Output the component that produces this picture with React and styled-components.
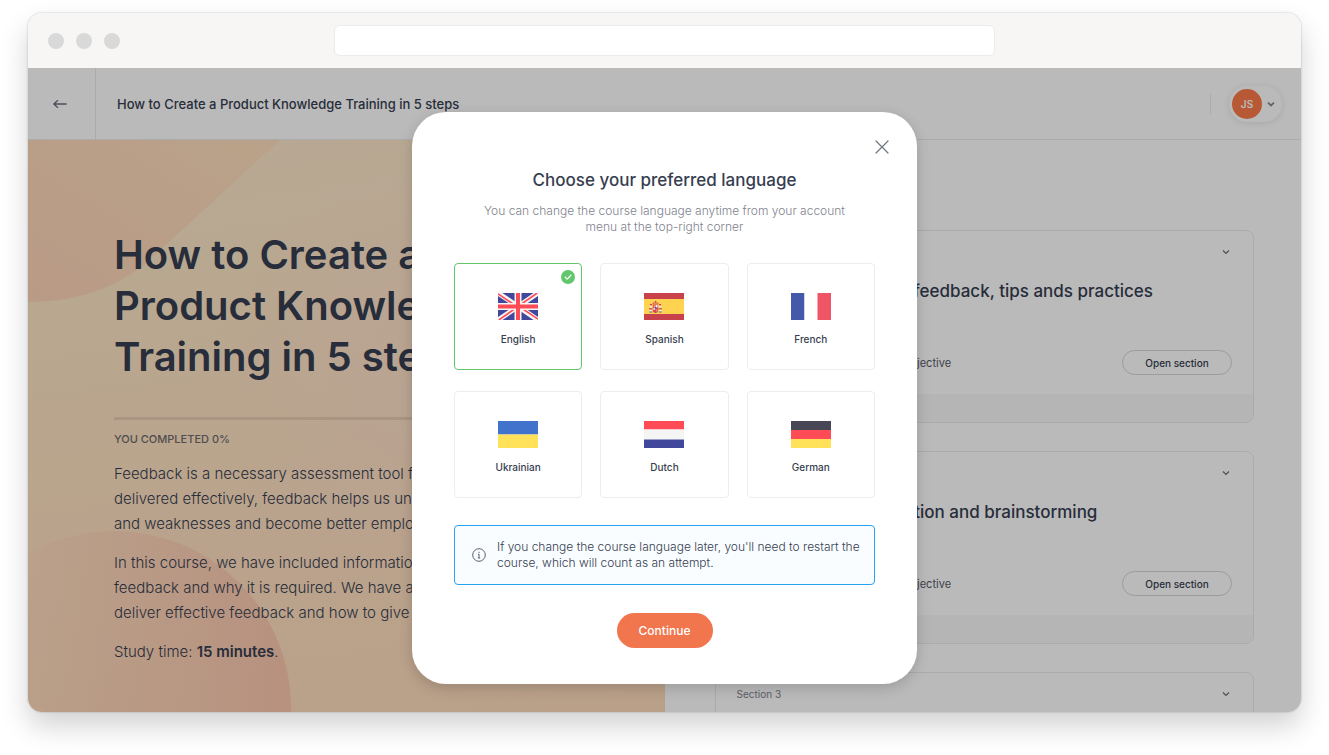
import React, { useState } from "react";
import styled, { createGlobalStyle } from "styled-components";

const ink = "#363e50";

const GlobalStyle = createGlobalStyle`
  * { box-sizing: border-box; }
  body {
    margin: 0;
    background: #fff;
    color: ${ink};
    font-family: Inter, "Liberation Sans", sans-serif;
    -webkit-font-smoothing: antialiased;
  }
  h1, h2, h3, p { margin: 0; }
  button, input { font-family: inherit; }
  button { cursor: pointer; }
`;

const Page = styled.div`
  height: 100vh;
  padding: 13px 28px 43px;
`;

const BrowserWindow = styled.div`
  display: flex;
  flex-direction: column;
  height: 100%;
  border-radius: 14px;
  overflow: hidden;
  background: #fff;
  box-shadow: 0 0 2px rgba(0, 0, 0, 0.28), 0 14px 28px rgba(0, 0, 0, 0.18);
`;

const BrowserBar = styled.div`
  display: grid;
  grid-template-columns: 1fr 52% 1fr;
  align-items: center;
  flex: none;
  height: 55px;
  background: #f7f6f5;
`;

const WindowDots = styled.div`
  display: flex;
  gap: 12px;
  padding-left: 20px;
`;

const Dot = styled.span`
  width: 16px;
  height: 16px;
  border-radius: 50%;
  background: #d9d9d9;
`;

const AddressInput = styled.input`
  width: 100%;
  height: 31px;
  border: 1px solid #ecebe7;
  border-radius: 6px;
  background: #fff;
`;

const AppArea = styled.div`
  position: relative;
  display: flex;
  flex-direction: column;
  flex: 1;
  min-height: 0;
  overflow: hidden;
`;

const Header = styled.header`
  display: flex;
  align-items: center;
  flex: none;
  height: 72px;
  padding-right: 19px;
  border-bottom: 1px solid #ebebeb;
`;

const BackButton = styled.button`
  display: flex;
  align-items: center;
  justify-content: center;
  width: 68px;
  height: 71px;
  padding: 0 4px 0 0;
  border: 0;
  border-right: 1px solid #ebebeb;
  background: none;
  color: #6a6f7b;
`;

const HeaderTitle = styled.h2`
  flex: 1;
  padding-left: 21px;
  font-size: 13px;
  line-height: 20px;
  font-weight: 500;
`;

const HeaderRule = styled.span`
  width: 1px;
  height: 20px;
  margin-right: 18px;
  background: #ebebeb;
`;

const UserMenu = styled.button`
  display: flex;
  align-items: center;
  gap: 5px;
  height: 36px;
  padding: 0 7px 0 3px;
  border: 0;
  border-radius: 18px;
  background: #fff;
  color: #858a95;
  box-shadow: 0 1px 6px rgba(40, 50, 70, 0.12);
`;

const Avatar = styled.span`
  width: 30px;
  height: 30px;
  border-radius: 50%;
  background: #fd7a49;
  color: #fff;
  font-size: 10px;
  line-height: 30px;
  font-weight: 600;
`;

const Columns = styled.div`
  display: grid;
  grid-template-columns: 1fr 1fr;
  flex: 1;
  min-height: 0;
`;

const Intro = styled.section`
  position: relative;
  overflow: hidden;
  padding: 89px 86px 0;
  background: radial-gradient(circle at 62% 32%, rgba(255, 224, 203, 0.8) 0, rgba(255, 224, 203, 0) 34%),
    linear-gradient(172deg, #fde8cc 0%, #fee5c4 25%, #ffe0c1 50%, #fed9b9 100%);
`;

const Shapes = styled.svg`
  position: absolute;
  inset: 0;
`;

const IntroBody = styled.div`
  position: relative;
  white-space: nowrap;
`;

const CourseTitle = styled.h1`
  font-size: 40px;
  line-height: 51px;
  font-weight: 600;
`;

const ProgressTrack = styled.div`
  height: 3px;
  margin-top: 35px;
  background: #e9cdb2;
`;

const ProgressLabel = styled.p`
  margin-top: 12px;
  color: #6f6a6c;
  font-size: 11px;
  line-height: 15px;
  font-weight: 500;
`;

const Paragraph = styled.p`
  margin-top: 14px;
  font-size: 15px;
  line-height: 25px;
  font-weight: 300;
  b { font-weight: 600; }
`;

const Sections = styled.section`
  display: flex;
  flex-direction: column;
  gap: 28px;
  padding: 90px 47px 0 50px;
`;

const SectionCard = styled.article`
  flex: none;
  height: 193px;
  border: 1px solid #ebebeb;
  border-radius: 8px;
  display: flex;
  flex-direction: column;
  overflow: hidden;
`;

const SectionTop = styled.div`
  display: flex;
  align-items: center;
  justify-content: space-between;
  padding: 11px 21px 0;
  color: #7f838d;
  font-size: 10px;
  line-height: 20px;
`;

const ToggleButton = styled.button`
  display: flex;
  padding: 2px;
  border: 0;
  background: none;
  color: #6a6f7b;
`;

const SectionTitle = styled.h3`
  padding: 17px 21px 0;
  font-size: 17px;
  line-height: 24px;
  font-weight: 500;
  white-space: nowrap;
`;

const SectionRow = styled.div`
  display: flex;
  align-items: center;
  justify-content: space-between;
  padding: 47px 21px 19px;
`;

const SectionMeta = styled.p`
  display: flex;
  gap: 26px;
  font-size: 11px;
  line-height: 16px;
  color: #555b69;
`;

const OpenButton = styled.button`
  width: 110px;
  height: 25px;
  padding: 0;
  border: 1px solid #d5d6d9;
  border-radius: 13px;
  background: none;
  color: ${ink};
  font-size: 10px;
  font-weight: 500;
`;

const SectionFoot = styled.div`
  flex: 1;
  background: #f9f9f9;
`;

const Overlay = styled.div`
  position: absolute;
  inset: 0;
  display: flex;
  justify-content: center;
  align-items: flex-start;
  padding-top: 44px;
  background: rgba(0, 0, 0, 0.27);
`;

const Modal = styled.div`
  position: relative;
  display: flex;
  flex-direction: column;
  align-items: center;
  width: 505px;
  padding: 56px 42px 36px;
  border-radius: 34px;
  background: #fff;
  box-shadow: 0 4px 14px rgba(0, 0, 0, 0.16);
`;

const CloseButton = styled.button`
  position: absolute;
  top: 25px;
  right: 25px;
  display: flex;
  padding: 3px;
  border: 0;
  background: none;
  color: #6f7480;
`;

const ModalTitle = styled.h2`
  font-size: 17px;
  line-height: 24px;
  font-weight: 500;
`;

const ModalText = styled.p`
  width: 370px;
  margin-top: 11px;
  color: #7f838e;
  font-size: 12px;
  line-height: 16px;
  font-weight: 300;
  text-align: center;
`;

const LanguageGrid = styled.div`
  display: grid;
  grid-template-columns: repeat(3, 1fr);
  gap: 21px 18px;
  width: 100%;
  margin-top: 28px;
`;

const LanguageCard = styled.label`
  position: relative;
  display: flex;
  flex-direction: column;
  align-items: center;
  gap: 11px;
  height: 107px;
  padding-top: 30px;
  font-size: 10px;
  line-height: 16px;
  font-weight: 500;
  cursor: pointer;
`;

const LanguageInput = styled.input`
  position: absolute;
  inset: 0;
  margin: 0;
  appearance: none;
  border: 1px solid #ededee;
  border-radius: 4px;
  cursor: pointer;
  &:checked { border-color: #62c66c; }
`;

const CheckBadge = styled.svg`
  position: absolute;
  top: 7px;
  right: 7px;
`;

const Notice = styled.div`
  display: flex;
  align-items: center;
  gap: 11px;
  width: 100%;
  height: 60px;
  margin-top: 27px;
  padding: 0 8px 0 17px;
  border: 1px solid #27a3f2;
  border-radius: 4px;
  background: #f9fdff;
  font-size: 12px;
  line-height: 16px;
  font-weight: 300;
  svg { flex: none; }
`;

const ContinueButton = styled.button`
  width: 96px;
  height: 35px;
  margin-top: 28px;
  padding: 0;
  border: 0;
  border-radius: 18px;
  background: #f1764d;
  color: #fff;
  font-size: 12px;
  line-height: 16px;
  font-weight: 500;
`;

const Chevron = ({ weight = 1.3 }) => (
  <svg width="8" height="8" viewBox="0 0 8 8" fill="none" stroke="currentColor" strokeWidth={weight} aria-hidden="true">
    <path d="M1 2.6 4 5.4 7 2.6" />
  </svg>
);

const flagArt = {
  English: (
    <>
      <path fill="#41479b" d="M0 0h40v27H0z" />
      <path stroke="#f5f5f5" strokeWidth="5" d="M0 0 40 27M40 0 0 27" />
      <path stroke="#ff4b55" strokeWidth="1.6" d="M0 .8 18 13M40 26.2 22 14M39.2 0 22 12M.8 27 18 15" />
      <path fill="#f5f5f5" d="M16.5 0h7v27h-7zM0 10h40v7H0z" />
      <path fill="#ff4b55" d="M18 0h4v27h-4zM0 11.5h40v4H0z" />
    </>
  ),
  Spanish: (
    <>
      <path fill="#c8414b" d="M0 0h40v27H0z" />
      <path fill="#ffd250" d="M0 6h40v15H0z" />
      <path fill="#e9a58a" d="M6.2 12h1.6v6H6.2zM15.2 12h1.6v6h-1.6z" />
      <path fill="#f5f5f5" d="M5.6 13.2h2.4v1.2H5.6zM15 13.2h2.4v1.2H15zM5.6 17h2.4v1.4H5.6zM15 17h2.4v1.4H15z" />
      <path fill="#5064aa" d="M5.4 18.6h2.8v.9H5.4zM14.8 18.6h2.8v.9h-2.8z" />
      <path fill="#c8414b" d="M5 15.2h3.4v1H5zM14.6 15.2H18v1h-3.4zM6 11h2v.9H6zM15 11h2v.9h-2z" />
      <path fill="#db4455" d="M8.8 11.6h5.4v5.6a2.7 2.7 0 0 1-5.4 0z" />
      <path fill="#f5f5f5" d="M11.6 12h2v2.4h-2zM9.4 14.8h1.8v2H9.4z" />
      <path fill="#ffb441" d="M9.6 12.4h1.4v1.4H9.6zM12.2 16.6h1.2v1.6h-1.2z" />
      <path fill="#5064aa" d="M10.8 14h1.6v2h-1.6z" />
      <path fill="none" stroke="#d0605a" strokeWidth="0.9" d="M8.8 10.8c0-2.4 5.4-2.4 5.4 0z" />
      <path fill="#c8414b" d="M11 8h1v1.4h-1z" />
    </>
  ),
  French: (
    <>
      <path fill="#4658a9" d="M0 0h13.5v27H0z" />
      <path fill="#fff" d="M13.5 0h13v27h-13z" />
      <path fill="#ef5565" d="M26.5 0H40v27H26.5z" />
    </>
  ),
  Ukrainian: (
    <>
      <path fill="#4173cd" d="M0 0h40v13.5H0z" />
      <path fill="#ffe15a" d="M0 13.5h40V27H0z" />
    </>
  ),
  Dutch: (
    <>
      <path fill="#ff4b55" d="M0 0h40v8.5H0z" />
      <path fill="#f5f5f5" d="M0 8.5h40v10H0z" />
      <path fill="#41479b" d="M0 18.5h40V27H0z" />
    </>
  ),
  German: (
    <>
      <path fill="#464655" d="M0 0h40v9H0z" />
      <path fill="#ff4b55" d="M0 9h40v9H0z" />
      <path fill="#ffe15a" d="M0 18h40v9H0z" />
    </>
  ),
};

const Flag = ({ name }) => (
  <svg width="40" height="27" viewBox="0 0 40 27" aria-hidden="true">{flagArt[name]}</svg>
);

const sections = [
  { id: 1, title: "Offering constructive feedback, tips ands practices" },
  { id: 2, title: "Creative ideas generation and brainstorming" },
  { id: 3 },
];

export default function App() {
  const [language, setLanguage] = useState("English");

  return (
    <Page>
      <GlobalStyle />
      <BrowserWindow>
        <BrowserBar>
          <WindowDots><Dot /><Dot /><Dot /></WindowDots>
          <AddressInput type="text" aria-label="Address" />
        </BrowserBar>
        <AppArea>
          <Header>
            <BackButton aria-label="Back">
              <svg width="14" height="10" viewBox="0 0 14 10" fill="none" stroke="currentColor" strokeWidth="1.3" strokeLinecap="round" strokeLinejoin="round" aria-hidden="true">
                <path d="M13.2 5H.9M4.6 1.6.8 5l3.8 3.4" />
              </svg>
            </BackButton>
            <HeaderTitle>How to Create a Product Knowledge Training in 5 steps</HeaderTitle>
            <HeaderRule />
            <UserMenu aria-label="Account menu">
              <Avatar>JS</Avatar>
              <Chevron weight={1.8} />
            </UserMenu>
          </Header>
          <Columns>
            <Intro>
              <Shapes width="100%" height="100%" aria-hidden="true">
                <defs>
                  <linearGradient id="corner" x1="1" y1="0" x2="0" y2="1">
                    <stop offset="0" stopColor="#ffdfbd" />
                    <stop offset="1" stopColor="#fed4b8" />
                  </linearGradient>
                  <linearGradient id="disc" x1="0" y1="0" x2="1" y2="0">
                    <stop offset="0.15" stopColor="#fcc7ae" stopOpacity="0" />
                    <stop offset="1" stopColor="#fcc5ad" stopOpacity="0.9" />
                  </linearGradient>
                </defs>
                <path fill="url(#corner)" d="M0 0H252L152 92C128 113 121 122 109 130C80 151 42 162 0 162Z" />
                <circle fill="url(#disc)" cx="86" cy="568" r="177" />
              </Shapes>
              <IntroBody>
                <CourseTitle>
                  How to Create a<br />Product Knowledge<br />Training in 5 steps
                </CourseTitle>
                <ProgressTrack />
                <ProgressLabel>YOU COMPLETED 0%</ProgressLabel>
                <Paragraph>
                  Feedback is a necessary assessment tool for all. When<br />
                  delivered effectively, feedback helps us understand<br />
                  and weaknesses and become better employees.
                </Paragraph>
                <Paragraph>
                  In this course, we have included information about<br />
                  feedback and why it is required. We have added how to<br />
                  deliver effective feedback and how to give it well.
                </Paragraph>
                <Paragraph>Study time: <b>15 minutes</b>.</Paragraph>
              </IntroBody>
            </Intro>
            <Sections>
              {sections.map(({ id, title }) => (
                <SectionCard key={id}>
                  <SectionTop>
                    <span>Section {id}</span>
                    <ToggleButton aria-label={`Toggle section ${id}`}><Chevron /></ToggleButton>
                  </SectionTop>
                  {title && (
                    <>
                      <SectionTitle>{title}</SectionTitle>
                      <SectionRow>
                        <SectionMeta><span>4 lessons</span><span>30 minutes</span><span>1 objective</span></SectionMeta>
                        <OpenButton>Open section</OpenButton>
                      </SectionRow>
                      <SectionFoot />
                    </>
                  )}
                </SectionCard>
              ))}
            </Sections>
          </Columns>
          <Overlay>
            <Modal role="dialog" aria-modal="true" aria-labelledby="language-title">
              <CloseButton aria-label="Close">
                <svg width="14" height="14" viewBox="0 0 14 14" fill="none" stroke="currentColor" strokeWidth="1.2" strokeLinecap="round" aria-hidden="true">
                  <path d="m1 1 12 12M13 1 1 13" />
                </svg>
              </CloseButton>
              <ModalTitle id="language-title">Choose your preferred language</ModalTitle>
              <ModalText>
                You can change the course language anytime from your account menu at the top-right corner
              </ModalText>
              <LanguageGrid role="radiogroup" aria-labelledby="language-title">
                {Object.keys(flagArt).map((name) => (
                  <LanguageCard key={name}>
                    <LanguageInput
                      type="radio"
                      name="language"
                      value={name}
                      checked={language === name}
                      onChange={() => setLanguage(name)}
                    />
                    <Flag name={name} />
                    <span>{name}</span>
                    {language === name && (
                      <CheckBadge width="14" height="14" viewBox="0 0 14 14" aria-hidden="true">
                        <circle cx="7" cy="7" r="7" fill="#62c66c" />
                        <path d="m4.2 7.2 2 1.9 3.7-3.8" fill="none" stroke="#fff" strokeWidth="1.3" strokeLinecap="round" strokeLinejoin="round" />
                      </CheckBadge>
                    )}
                  </LanguageCard>
                ))}
              </LanguageGrid>
              <Notice>
                <svg width="14" height="14" viewBox="0 0 14 14" fill="none" stroke="#5b6170" aria-hidden="true">
                  <circle cx="7" cy="7" r="6.3" />
                  <path d="M7 6v4M7 3.8v1.2M6 6.3h1M5.8 10h2.4" />
                </svg>
                <p>If you change the course language later, you'll need to restart the course, which will count as an attempt.</p>
              </Notice>
              <ContinueButton>Continue</ContinueButton>
            </Modal>
          </Overlay>
        </AppArea>
      </BrowserWindow>
    </Page>
  );
}
